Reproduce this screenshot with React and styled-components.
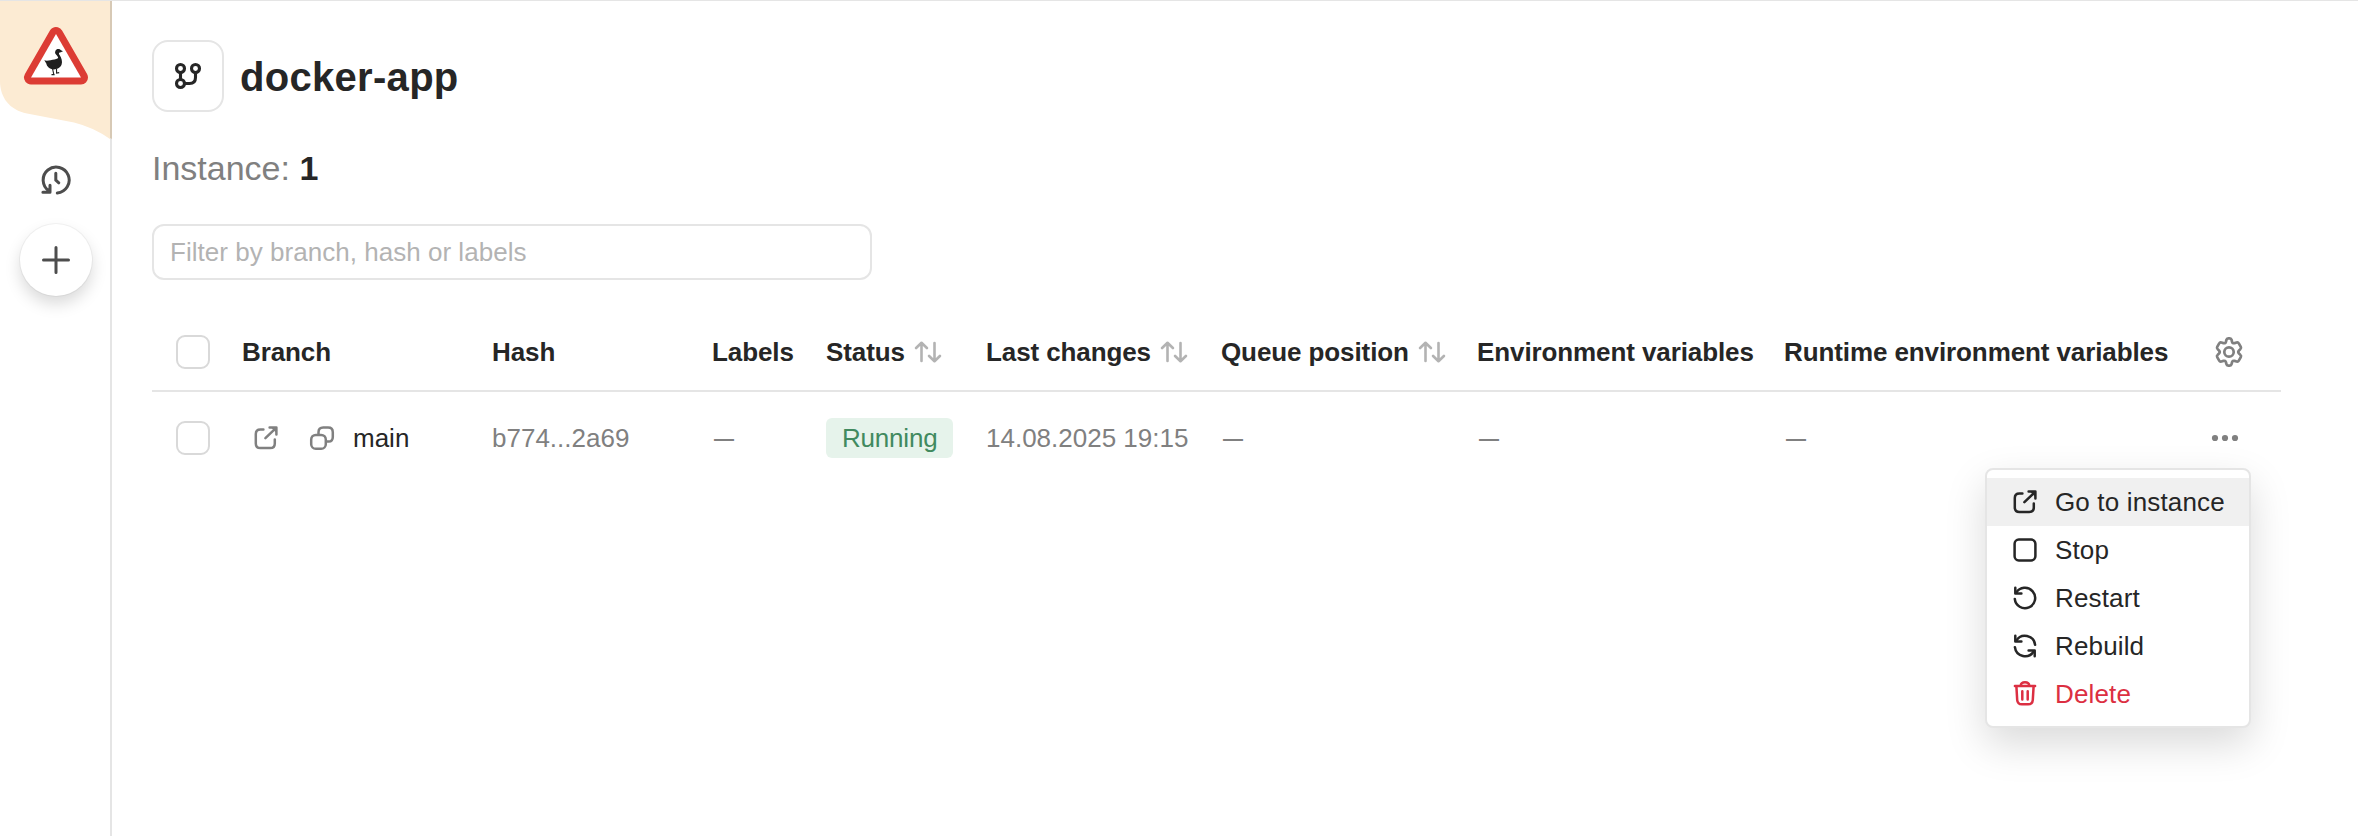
import React from "react";
import styled, { createGlobalStyle } from "styled-components";

const GlobalStyle = createGlobalStyle`
  * { box-sizing: border-box; }
  body {
    margin: 0;
    background: #fff;
    color: #262626;
    font-family: "Liberation Sans", Arial, sans-serif;
    font-size: 26px;
    line-height: 36px;
  }
`;

const Page = styled.div`
  display: flex;
  height: 836px;
  overflow: hidden;
  border-top: 1px solid #e5e5e5;
`;

const Sidebar = styled.aside`
  flex: none;
  width: 112px;
  border-right: 2px solid #e5e5e5;
  display: flex;
  flex-direction: column;
  align-items: center;
`;

const Brand = styled.div`
  width: 110px;
  height: 139px;

  svg { display: block; overflow: visible; }
`;

const SideButton = styled.button`
  display: flex;
  align-items: center;
  justify-content: center;
  width: 72px;
  height: 72px;
  padding: 0;
  border: 0;
  border-radius: 50%;
  background: #fff;
  color: #4d4d4d;
  margin-top: ${(p) => (p.$raised ? 8 : 4)}px;
  margin-left: 2px;
  box-shadow: ${(p) =>
    p.$raised ? "0 0 0 1px rgba(0,0,0,.045), 0 8px 16px rgba(0,0,0,.15)" : "none"};
`;

const Main = styled.main`
  flex: 1;
  padding: 39px 77px 0 40px;
  display: flex;
  flex-direction: column;
`;

const Header = styled.header`
  display: flex;
  align-items: center;
  gap: 16px;
`;

const IconBox = styled.div`
  width: 72px;
  height: 72px;
  border: 2px solid #e5e5e5;
  border-radius: 16px;
  display: flex;
  align-items: center;
  justify-content: center;
`;

const Title = styled.h1`
  margin: 2px 0 0;
  font-size: 40px;
  line-height: 52px;
  letter-spacing: 0.3px;
`;

const Summary = styled.div`
  margin-top: 34px;
  font-size: 34px;
  line-height: 44px;
  color: #808080;

  b { color: #262626; }
`;

const Filter = styled.input`
  margin-top: 34px;
  width: 720px;
  height: 56px;
  padding: 0 16px;
  border: 2px solid #e5e5e5;
  border-radius: 12px;
  font: inherit;
  letter-spacing: 0.03px;
  outline: none;

  &::placeholder { color: #b3b3b3; opacity: 1; }
`;

const Table = styled.div`
  margin-top: 34px;
`;

const Row = styled.div`
  display: grid;
  grid-template-columns: 90px 250px 220px 114px 160px 235px 256px 307px 1fr 100px;
  align-items: center;
  height: ${(p) => (p.$head ? 78 : 92)}px;
  font-weight: ${(p) => (p.$head ? 700 : 400)};
  letter-spacing: ${(p) => (p.$head ? -0.1 : 0)}px;
  color: ${(p) => (p.$head ? "#262626" : "#808080")};
  border-bottom: ${(p) => (p.$head ? "2px solid #e5e5e5" : "0")};
`;

const Cell = styled.div`
  display: flex;
  align-items: center;
  white-space: nowrap;
`;

const Checkbox = styled.span`
  width: 34px;
  height: 34px;
  margin-left: 24px;
  border: 2px solid #d9d9d9;
  border-radius: 9px;
`;

const SortIcon = styled.svg`
  margin-left: 9px;
  color: #b3b3b3;
`;

const BranchIcons = styled.span`
  display: flex;
  gap: 28px;
  margin: 0 17px 0 10px;
`;

const BranchName = styled.span`
  color: #262626;
`;

const Dash = styled.span`
  padding-left: 2px;
  font-size: 20px;
  font-weight: 700;
`;

const Tag = styled.span`
  height: 40px;
  padding: 0 16px;
  border-radius: 6px;
  line-height: 40px;
  letter-spacing: -0.2px;
  background: #e6f3eb;
  color: #418a5f;
`;

const Actions = styled.div`
  position: relative;
  display: flex;
  padding-left: ${(p) => p.$inset}px;
  color: #808080;
`;

const Menu = styled.div`
  position: absolute;
  top: 34px;
  right: 30px;
  width: 266px;
  padding: 8px 0;
  border: 2px solid #e5e5e5;
  border-radius: 8px;
  background: #fff;
  box-shadow: 0 16px 40px rgba(0, 0, 0, 0.15);
`;

const MenuItem = styled.div`
  display: flex;
  align-items: center;
  gap: 16px;
  height: 48px;
  padding-left: 24px;
  white-space: nowrap;
  letter-spacing: 0.15px;
  background: ${(p) => (p.$active ? "#f0f0f0" : "transparent")};
  color: ${(p) => (p.$danger ? "#dc2f42" : "#262626")};
`;

const Icon = ({ size = 28, width = 2.5, children }) => (
  <svg
    width={size}
    height={size}
    viewBox={`0 0 ${size} ${size}`}
    fill="none"
    stroke="currentColor"
    strokeWidth={width}
    strokeLinecap="round"
    strokeLinejoin="round"
  >
    {children}
  </svg>
);

const External = () => (
  <Icon>
    <path d="M11.4 5.4H8.4Q3.8 5.400 3.800 10V19.400Q3.800 24 8.400 24H18.200Q22.800 24 22.800 19.400V15.600" />
    <path d="M13.400 14.200 23.600 4.400" />
    <path d="M17.600 3.600H24.400V10.400" />
    <path d="M19.500 4H24V8.500Z" fill="currentColor" stroke="none" />
  </Icon>
);

const Copy = () => (
  <Icon>
    <rect x="3.200" y="10.900" width="14.600" height="13.900" rx="4.600" />
    <path d="M10.500 10.600V8.200Q10.500 3.500 15.200 3.500H20.100Q24.800 3.500 24.800 8.200V12.900Q24.800 17.200 20.600 17.600H18.400" />
  </Icon>
);

const StopIcon = () => (
  <Icon>
    <rect x="3.600" y="3.600" width="20.800" height="20.800" rx="4.200" />
  </Icon>
);

const Restart = () => (
  <Icon>
    <path d="M3.800 14.900A10.200 10.200 0 1 0 5.200 8.800" />
    <path d="M4.300 3.700V9.500H10.400" />
  </Icon>
);

const Rebuild = () => (
  <Icon>
    <path d="M5.200 8.800A10.200 10.200 0 0 1 24.100 12.800" />
    <path d="M4.300 3.700V9.500H10.400" />
    <path d="M3.900 15.200A10.200 10.200 0 0 0 22.800 19.200" />
    <path d="M23.700 24.300V18.500H17.600" />
  </Icon>
);

const Trash = () => (
  <Icon>
    <path d="M3.900 6H24.100M5.400 6.400 6.200 20Q6.500 24.300 10.800 24.300H17.200Q21.500 24.300 21.800 20L22.600 6.400" />
    <path d="M9.700 5.800Q10 2.300 14 2.300T18.300 5.800" />
    <path d="M11.300 11.200V19.400M16.700 11.200V19.400" />
  </Icon>
);

const Branches = () => (
  <Icon size={32} width={3.1}>
    <circle cx="8.500" cy="8.500" r="4" />
    <circle cx="23.500" cy="8.500" r="4" />
    <circle cx="8.500" cy="23.500" r="4" />
    <path d="M8.500 12.500V19.500M23.500 12.500V17.500Q23.500 23.500 17.500 23.500H12.500" />
  </Icon>
);

const History = () => (
  <Icon size={32} width={3}>
    <path d="M17.300 29A13 13 0 1 0 9 26.900" />
    <path d="M2.900 28.200H10V21.200" />
    <path d="M5.500 28 10 22.500V28Z" fill="currentColor" stroke="none" />
    <path d="M15.800 9.300V16.200L18.800 18.800" />
  </Icon>
);

const Plus = () => (
  <Icon size={32} width={3}>
    <path d="M16 3.500V28.500M3.500 16H28.500" />
  </Icon>
);

const Gear = () => (
  <Icon size={32} width={2.7}>
    <circle cx="16" cy="16" r="4.700" />
    <path d="M13.400 3.900Q13.700 2.400 15.200 2.400H16.800Q18.300 2.400 18.600 3.900L19 5.600Q19.500 7.700 21.600 7.100L23.600 6.500Q25.100 6.100 25.800 7.400L27.800 10.900Q28.500 12.100 27.400 13.100L26 14.500Q24.600 16 26 17.500L27.400 18.900Q28.500 19.900 27.800 21.100L25.800 24.600Q25.100 25.900 23.600 25.500L21.600 24.900Q19.500 24.300 19 26.400L18.600 28.100Q18.300 29.600 16.800 29.600H15.200Q13.700 29.600 13.400 28.100L13 26.400Q12.500 24.300 10.400 24.900L8.400 25.500Q6.900 25.900 6.200 24.600L4.200 21.100Q3.500 19.900 4.600 18.900L6 17.500Q7.400 16 6 14.500L4.600 13.100Q3.500 12.100 4.200 10.900L6.200 7.400Q6.900 6.100 8.400 6.500L10.400 7.100Q12.500 7.700 13 5.600Z" />
  </Icon>
);

const Dots = () => (
  <svg width="28" height="8" viewBox="0 0 28 8" fill="currentColor">
    <circle cx="4" cy="4" r="3.1" />
    <circle cx="14" cy="4" r="3.1" />
    <circle cx="24" cy="4" r="3.1" />
  </svg>
);

const Sort = () => (
  <SortIcon
    width="28"
    height="22"
    viewBox="0 0 28 22"
    fill="none"
    stroke="currentColor"
    strokeWidth="2.600"
    strokeLinecap="round"
    strokeLinejoin="round"
  >
    <path d="M7.500 20V2M2.100 7 7.500 1.800 12.900 7" />
    <path d="M20.500 2V20M15.100 15 20.500 20.200 25.900 15" />
  </SortIcon>
);

const Logo = () => (
  <svg width="112" height="139" viewBox="0 0 112 139">
    <path d="M0 0H110V138Q94 126.500 74 121.500L27 112.500C10 109 0 97 0 80Z" fill="#fcebd3" />
    <path d="M110 0H112V138L110 137Z" fill="#d7c9b5" />
    <path d="M0-1H112V0H0Z" fill="#d7c9b5" />
    <path d="M56 33 31 76.500H81Z" fill="#fff" stroke="#dc3c34" strokeWidth="14" strokeLinejoin="round" />
    <path d="M56 33 31 76.500H81Z" fill="#fff" />
    <path
      d="M44.300 59.300C47 60.500 51 59 54.500 58.500C57 58 58.600 57.400 58 56C56.500 53.500 54.200 52.600 55.400 50C56.400 47.500 59.400 47.400 61 49.300L63 50.200L60.800 51.200C59 51.500 58.300 52.200 59.600 54C61.500 57 62.700 60.500 61.600 63.600C60.300 67 56.600 68.500 53.600 68.400C49.600 68 46.800 65.500 46.300 62.500Z"
      fill="#1f1f1f"
    />
    <path d="M52.600 68 53.800 73.400M51.500 73.600H54.600M56.500 68 56.600 72L59.200 71.600" fill="none" stroke="#1f1f1f" strokeWidth="1.100" />
  </svg>
);

const menuItems = [
  { label: "Go to instance", icon: External, active: true },
  { label: "Stop", icon: StopIcon },
  { label: "Restart", icon: Restart },
  { label: "Rebuild", icon: Rebuild },
  { label: "Delete", icon: Trash, danger: true },
];

export default function App() {
  return (
    <Page>
      <GlobalStyle />
      <Sidebar>
        <Brand><Logo /></Brand>
        <SideButton aria-label="History"><History /></SideButton>
        <SideButton $raised aria-label="Create"><Plus /></SideButton>
      </Sidebar>
      <Main>
        <Header>
          <IconBox><Branches /></IconBox>
          <Title>docker-app</Title>
        </Header>
        <Summary>Instance: <b>1</b></Summary>
        <Filter placeholder="Filter by branch, hash or labels" />
        <Table>
          <Row $head>
            <Cell><Checkbox /></Cell>
            <Cell>Branch</Cell>
            <Cell>Hash</Cell>
            <Cell>Labels</Cell>
            <Cell>Status<Sort /></Cell>
            <Cell>Last changes<Sort /></Cell>
            <Cell>Queue position<Sort /></Cell>
            <Cell>Environment variables</Cell>
            <Cell>Runtime environment variables</Cell>
            <Actions $inset={32}><Gear /></Actions>
          </Row>
          <Row>
            <Cell><Checkbox /></Cell>
            <Cell>
              <BranchIcons><External /><Copy /></BranchIcons>
              <BranchName>main</BranchName>
            </Cell>
            <Cell>b774...2a69</Cell>
            <Cell><Dash>—</Dash></Cell>
            <Cell><Tag>Running</Tag></Cell>
            <Cell>14.08.2025 19:15</Cell>
            <Cell><Dash>—</Dash></Cell>
            <Cell><Dash>—</Dash></Cell>
            <Cell><Dash>—</Dash></Cell>
            <Actions $inset={30}>
              <Dots />
              <Menu>
                {menuItems.map(({ label, icon: ItemIcon, active, danger }) => (
                  <MenuItem key={label} $active={active} $danger={danger}>
                    <ItemIcon />
                    {label}
                  </MenuItem>
                ))}
              </Menu>
            </Actions>
          </Row>
        </Table>
      </Main>
    </Page>
  );
}
